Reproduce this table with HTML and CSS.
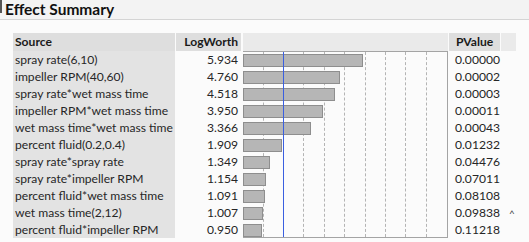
FILE: index.html
```html
<!DOCTYPE html>
<html>
<head>
<meta charset="utf-8">
<link rel="stylesheet" href="styles.css">
</head>
<body>
<div class="report">
  <div class="title"><span class="title-mark"></span><span class="title-text">Effect Summary</span></div>
  <div class="table">
    <div class="col col-source">
      <div class="hd">Source</div>
      <div class="cell">spray rate(6,10)</div>
      <div class="cell">impeller RPM(40,60)</div>
      <div class="cell">spray rate*wet mass time</div>
      <div class="cell">impeller RPM*wet mass time</div>
      <div class="cell">wet mass time*wet mass time</div>
      <div class="cell">percent fluid(0.2,0.4)</div>
      <div class="cell">spray rate*spray rate</div>
      <div class="cell">spray rate*impeller RPM</div>
      <div class="cell">percent fluid*wet mass time</div>
      <div class="cell">wet mass time(2,12)</div>
      <div class="cell">percent fluid*impeller RPM</div>
    </div>
    <div class="col col-lw">
      <div class="hd">LogWorth</div>
      <div class="cell">5.934</div>
      <div class="cell">4.760</div>
      <div class="cell">4.518</div>
      <div class="cell">3.950</div>
      <div class="cell">3.366</div>
      <div class="cell">1.909</div>
      <div class="cell">1.349</div>
      <div class="cell">1.154</div>
      <div class="cell">1.091</div>
      <div class="cell">1.007</div>
      <div class="cell">0.950</div>
    </div>
    <div class="col col-chart">
      <div class="hd hd-light"></div>
      <div class="chart">
        <div class="grid">
          <span class="gl" style="left:20px"></span>
          <span class="gl" style="left:60px"></span>
          <span class="gl" style="left:81px"></span>
          <span class="gl" style="left:101px"></span>
          <span class="gl" style="left:122px"></span>
          <span class="gl" style="left:142px"></span>
          <span class="gl" style="left:162px"></span>
          <span class="gl" style="left:183px"></span>
        </div>
        <div class="brow"><div class="bar" style="width:120px"></div></div>
        <div class="brow"><div class="bar" style="width:97px"></div></div>
        <div class="brow"><div class="bar" style="width:92px"></div></div>
        <div class="brow"><div class="bar" style="width:80px"></div></div>
        <div class="brow"><div class="bar" style="width:68px"></div></div>
        <div class="brow"><div class="bar" style="width:39px"></div></div>
        <div class="brow"><div class="bar" style="width:27px"></div></div>
        <div class="brow"><div class="bar" style="width:23px"></div></div>
        <div class="brow"><div class="bar" style="width:22px"></div></div>
        <div class="brow"><div class="bar" style="width:20px"></div></div>
        <div class="brow"><div class="bar" style="width:19px"></div></div>
        <span class="blue"></span>
      </div>
    </div>
    <div class="col col-pv">
      <div class="hd-row"><div class="hd">PValue</div><div class="hd hd-light hd-tail"></div></div>
      <div class="cell">0.00000</div>
      <div class="cell">0.00002</div>
      <div class="cell">0.00003</div>
      <div class="cell">0.00011</div>
      <div class="cell">0.00043</div>
      <div class="cell">0.01232</div>
      <div class="cell">0.04476</div>
      <div class="cell">0.07011</div>
      <div class="cell">0.08108</div>
      <div class="cell">0.09838 <span class="caret">^</span></div>
      <div class="cell">0.11218</div>
    </div>
  </div>
</div>
</body>
</html>
```

FILE: styles.css
```css
html, body {
  margin: 0;
  padding: 0;
  background: #fbfbfb;
}
body {
  width: 529px;
  height: 242px;
  overflow: hidden;
  font-family: "Lato", "Noto Sans", sans-serif;
  color: #262626;
}
.title {
  height: 19px;
  border-bottom: 1px solid #d4d4d4;
  background: #f3f3f3;
  display: flex;
  align-items: flex-start;
}
.title-mark {
  width: 2px;
  height: 13px;
  background: #555;
}
.title-text {
  margin-left: 3px;
  font-size: 15.5px;
  font-weight: 700;
  line-height: 18px;
  color: #111;
}
.table {
  display: flex;
  margin-top: 13px;
  margin-left: 13px;
  font-size: 12.1px;
}
.col {
  display: flex;
  flex-direction: column;
}
.hd {
  height: 18px;
  line-height: 18px;
  background: #dedede;
  font-weight: 700;
  color: #1a1a1a;
}
.hd-light {
  background: #eaeaea;
}
.cell {
  height: 17px;
  line-height: 17px;
  white-space: nowrap;
}
.col-source {
  width: 162px;
  background: #e3e3e3;
}
.col-source .hd, .col-source .cell {
  padding-left: 2px;
}
.col-lw {
  width: 65px;
  margin-left: 1px;
  text-align: right;
}
.col-lw .hd, .col-lw .cell {
  padding-right: 3px;
}
.col-chart {
  width: 205px;
  margin-left: 2px;
}
.chart {
  position: relative;
  height: 187px;
  box-sizing: border-box;
  border: 1px solid #a4a4a4;
  border-left: none;
}
.grid {
  position: absolute;
  inset: 0;
}
.gl {
  position: absolute;
  top: 0;
  bottom: 0;
  border-left: 1px dashed #b4b4b4;
}
.blue {
  position: absolute;
  top: 0;
  bottom: 0;
  left: 40px;
  width: 1px;
  background: #3a5fe0;
}
.brow {
  position: relative;
  height: 17px;
  display: flex;
  align-items: center;
}
.brow:first-of-type {
  margin-top: -1px;
}
.bar {
  height: 13px;
  box-sizing: border-box;
  background: #b6b6b6;
  border: 1px solid #8e8e8e;
}
.col-pv {
  width: 67px;
  margin-left: 1px;
}
.hd-row {
  display: flex;
}
.col-pv .hd-row .hd:first-child {
  width: 45px;
  padding-left: 7px;
}
.hd-tail {
  width: 15px;
  margin-left: 1px;
}
.col-pv .cell {
  padding-left: 6px;
}
.caret {
  margin-left: 6px;
  font-size: 10px;
  color: #444;
}
```
